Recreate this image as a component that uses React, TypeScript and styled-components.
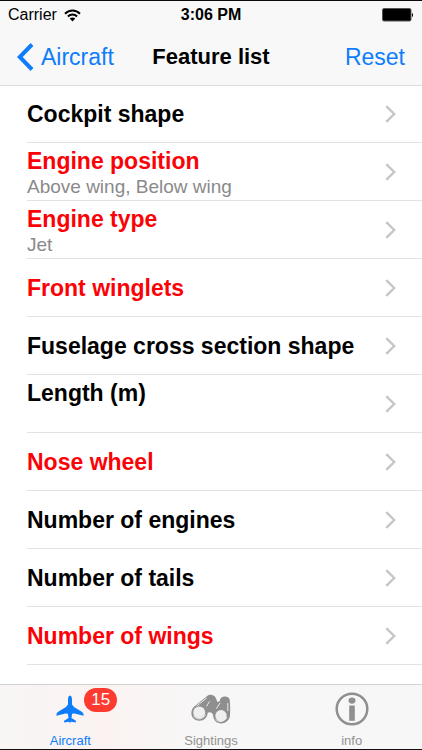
import React from "react";
import styled, { createGlobalStyle } from "styled-components";

const GlobalStyle = createGlobalStyle`
  * { box-sizing: border-box; }
  body { margin: 0; background: #fff; }
  button { appearance: none; border: 0; background: none; padding: 0; margin: 0; font: inherit; color: inherit; cursor: pointer; }
`;

const Screen = styled.div`
  display: flex;
  flex-direction: column;
  height: 100vh;
  overflow: hidden;
  border-top: 1px solid #0c0a10;
  border-bottom: 1px solid #111;
  background: #fff;
  color: #000;
  font-family: "Liberation Sans", Arial, sans-serif;
`;

const Header = styled.header`
  flex: none;
  position: relative;
  background: #f8f8f8;
  box-shadow: 0 1px 0 #dcdcdc;
`;

const StatusBar = styled.div`
  display: grid;
  grid-template-columns: 1fr auto 1fr;
  align-items: center;
  height: 28px;
  padding: 0 8px;
  font-size: 16px;
  line-height: 20px;
`;

const Carrier = styled.span`
  display: flex;
  align-items: center;
  gap: 7px;
`;

const Clock = styled.time`
  font-weight: bold;
`;

const BatteryIcon = styled.svg`
  justify-self: end;
`;

const NavBar = styled.nav`
  display: grid;
  grid-template-columns: 1fr auto 1fr;
  align-items: center;
  height: 56px;
  padding: 0 17px;
  color: #0f7dfa;
  font-size: 23px;
  line-height: 28px;
`;

const BackLink = styled.a`
  display: flex;
  align-items: center;
  gap: 7px;
  color: inherit;
  text-decoration: none;
`;

const Title = styled.h1`
  margin: 0;
  color: #000;
  font-size: 22px;
  font-weight: bold;
  line-height: 28px;
`;

const ResetButton = styled.button`
  && {
    justify-self: end;
  }
`;

const FeatureList = styled.ul`
  flex: 1;
  min-height: 0;
  margin: 0;
  padding: 0 0 0 27px;
  overflow: hidden;
  list-style: none;
`;

const FeatureRow = styled.li`
  height: 58px;
  border-bottom: 1px solid #e2e2e4;
`;

const FeatureButton = styled.button`
  && {
    display: flex;
    align-items: center;
    justify-content: space-between;
    width: 100%;
    height: 100%;
    padding-right: 26px;
    text-align: left;
  }
`;

const FeatureText = styled.span`
  display: flex;
  flex-direction: column;
`;

const FeatureName = styled.span<{ $active?: boolean }>`
  color: ${(p) => (p.$active ? "#fb0207" : "#000")};
  font-size: 23px;
  font-weight: bold;
  line-height: 28px;
`;

const FeatureValue = styled.span`
  height: 22px;
  color: #8a8a8a;
  font-size: 19px;
  line-height: 24px;
`;

const TabBar = styled.nav`
  flex: none;
  display: grid;
  grid-template-columns: repeat(3, 1fr);
  height: 65px;
  border-top: 1px solid #d0d0d0;
  background: linear-gradient(90deg, #f8f5f5 0%, #fbf3f2 25%, #f7f7f7 50%);
`;

const Tab = styled.a<{ $selected?: boolean }>`
  display: flex;
  flex-direction: column;
  align-items: center;
  justify-content: flex-end;
  color: ${(p) => (p.$selected ? "#0f7dfa" : "#929292")};
  font-size: 13px;
  line-height: 16px;
  text-decoration: none;
`;

const TabIcon = styled.span`
  position: relative;
  display: flex;
  align-items: center;
  justify-content: center;
  width: 40px;
  height: 48px;
`;

const Badge = styled.span`
  position: absolute;
  top: 3px;
  left: 34px;
  min-width: 33px;
  height: 24px;
  border-radius: 12px;
  background: #fd3b31;
  color: #fff;
  font-size: 17px;
  line-height: 24px;
  text-align: center;
`;

const WifiIcon = () => (
  <svg width="17" height="13" viewBox="0 0 17 13" aria-hidden="true">
    <g fill="none" stroke="#000" strokeWidth="2">
      <path d="M1 4.7C5.2.4 11.8.4 16 4.7" />
      <path d="M3.9 7.5c2.6-2.6 6.6-2.6 9.2 0" />
    </g>
    <path d="M8.5 12.4 5.7 9.5c1.6-1.4 4-1.4 5.6 0z" />
  </svg>
);

const Battery = () => (
  <BatteryIcon width="32" height="14" viewBox="0 0 32 14" role="img" aria-label="Battery full">
    <rect x=".5" y=".5" width="28.500" height="12.500" rx="1.500" stroke="#555" />
    <path d="M30 5c1.300.4 1.300 3.600 0 4z" />
  </BatteryIcon>
);

const BackIcon = () => (
  <svg width="17" height="28" viewBox="0 0 17 28" fill="none" stroke="currentColor" strokeWidth="4" aria-hidden="true">
    <path d="M15 1.500 2.800 14 15 26.500" />
  </svg>
);

const ChevronIcon = () => (
  <svg width="11" height="18" viewBox="0 0 11 18" fill="none" stroke="#c5c5ca" strokeWidth="2.400" aria-hidden="true">
    <path d="m1.300 1.200 7.900 7.800-7.900 7.800" />
  </svg>
);

const PlaneIcon = () => (
  <svg width="28" height="28" viewBox="0 0 28 28" fill="currentColor" aria-hidden="true">
    <path d="M14 .5c1.300 0 2 2.200 2 4.400v4.600l2 2.400 7.800 4.900c1.200.8 1.800 1.900 1.800 3.900l-9.200-2.200-2.300.3-.6 4.300 4.400 2.700v1.700L15 26.700l-1 1.300-1-1.300-4.900.8v-1.700l4.400-2.700-.6-4.300-2.300-.3L.4 20.700c0-2 .6-3.100 1.800-3.900L10 11.900l2-2.400V4.900C12 2.700 12.700.5 14 .5z" />
  </svg>
);

const BinocularsIcon = () => (
  <svg width="40" height="30" viewBox="0 0 40 30" aria-hidden="true">
    <path
      d="M3 12.800 15.600 2.400C18-.2 23.500.2 25 4.600l1.400 3.300 2.500-.9C28.700 1.800 37.500 1 38.700 5.600c.6 5.500.6 11.500.2 17-1 4-4.600 6.900-8.700 6.900-4.600 0-7.800-3.300-8-7.700-.1-2-1.700-3.400-3.600-3.600l-2 .6c.1 4.400-3.600 7.900-8.200 7.900C3.700 26.700.4 23.300.4 19.200c0-2.500.9-4.800 2.600-6.400z"
      fill="#8f8f8f"
    />
    <circle cx="8.200" cy="18.400" r="6" fill="#efefef" />
    <circle cx="30" cy="21.700" r="5.700" fill="#efefef" />
    <path d="M2.500 21.800c2.400 4.300 9.600 4.300 12.200-1.200M24.600 25.300c3 3.600 9.400 2.700 11.200-2.200" fill="none" stroke="#f7f7f7" strokeWidth=".8" />
    <path d="M5.500 12.200 15.600 4.100M15.500 12.400l3-5M25.500 14.600l3.600-5.800M36.800 17V9" fill="none" stroke="#f3f3f3" strokeWidth=".9" />
  </svg>
);

const InfoIcon = () => (
  <svg width="34" height="34" viewBox="0 0 34 34" aria-hidden="true">
    <circle cx="17" cy="17" r="15.300" fill="none" stroke="#8f8f8f" strokeWidth="2.500" />
    <ellipse cx="17" cy="8.600" rx="3.500" ry="3.100" fill="#8f8f8f" />
    <path d="M14.200 13.500h5.600v15.300h-5.600z" fill="#8f8f8f" />
  </svg>
);

type Feature = { name: string; active?: boolean; value?: string };

const features: Feature[] = [
  { name: "Cockpit shape" },
  { name: "Engine position", active: true, value: "Above wing, Below wing" },
  { name: "Engine type", active: true, value: "Jet" },
  { name: "Front winglets", active: true },
  { name: "Fuselage cross section shape" },
  { name: "Length (m)", value: "" },
  { name: "Nose wheel", active: true },
  { name: "Number of engines" },
  { name: "Number of tails" },
  { name: "Number of wings", active: true },
];

export default function App() {
  return (
    <>
      <GlobalStyle />
      <Screen>
        <Header>
          <StatusBar>
            <Carrier>
              Carrier
              <WifiIcon />
            </Carrier>
            <Clock>3:06 PM</Clock>
            <Battery />
          </StatusBar>
          <NavBar>
            <BackLink href="#aircraft">
              <BackIcon />
              Aircraft
            </BackLink>
            <Title>Feature list</Title>
            <ResetButton type="button">Reset</ResetButton>
          </NavBar>
        </Header>
        <FeatureList>
          {features.map((f) => (
            <FeatureRow key={f.name}>
              <FeatureButton type="button">
                <FeatureText>
                  <FeatureName $active={f.active}>{f.name}</FeatureName>
                  {f.value !== undefined && <FeatureValue>{f.value}</FeatureValue>}
                </FeatureText>
                <ChevronIcon />
              </FeatureButton>
            </FeatureRow>
          ))}
        </FeatureList>
        <TabBar>
          <Tab href="#aircraft" $selected aria-current="page">
            <TabIcon>
              <PlaneIcon />
              <Badge>15</Badge>
            </TabIcon>
            Aircraft
          </Tab>
          <Tab href="#sightings">
            <TabIcon>
              <BinocularsIcon />
            </TabIcon>
            Sightings
          </Tab>
          <Tab href="#info">
            <TabIcon>
              <InfoIcon />
            </TabIcon>
            info
          </Tab>
        </TabBar>
      </Screen>
    </>
  );
}
